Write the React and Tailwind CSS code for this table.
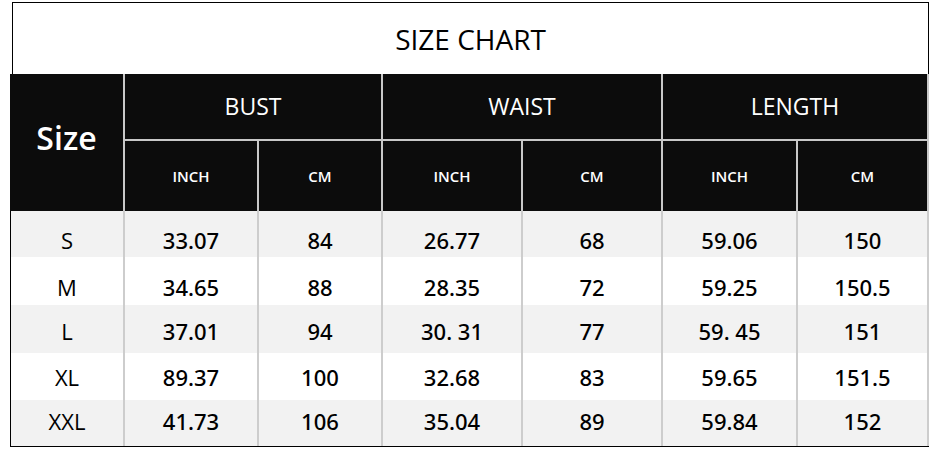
import React from 'react'

const headCols = 'grid grid-cols-[113px_132px_122px_138px_138px_133px_129px] gap-x-[2px]'
const bodyCols = 'grid grid-cols-[112px_132px_122px_138px_138px_133px_129px] gap-x-[2px]'

const rows = [
  { size: 'S', vals: ['33.07', '84', '26.77', '68', '59.06', '150'], bg: 'bg-[#f2f2f2]', h: 'h-[46px]', pad: 'pt-[12px]' },
  { size: 'M', vals: ['34.65', '88', '28.35', '72', '59.25', '150.5'], bg: 'bg-white', h: 'h-[48px]', pad: 'pt-[13px]' },
  { size: 'L', vals: ['37.01', '94', '30. 31', '77', '59. 45', '151'], bg: 'bg-[#f2f2f2]', h: 'h-[48px]', pad: 'pt-[5px]' },
  { size: 'XL', vals: ['89.37', '100', '32.68', '83', '59.65', '151.5'], bg: 'bg-white', h: 'h-[47px]', pad: 'pt-[2px]' },
  { size: 'XXL', vals: ['41.73', '106', '35.04', '89', '59.84', '152'], bg: 'bg-[#f2f2f2]', h: 'h-[46px]', pad: 'pb-[4px]' },
]

export default function App() {
  return (
    <div className="w-[937px] h-[460px] bg-white font-['Open_Sans',sans-serif] text-black">
      {/* title */}
      <div className="ml-[12px] mt-[2px] w-[917px] h-[72px] border-x border-t border-black flex items-center justify-center pt-[1px]">
        <span className="text-[28px] leading-none font-medium">SIZE CHART</span>
      </div>

      {/* header */}
      <div className={`ml-[10px] w-[919px] pr-[2px] bg-[#c9c9c9] grid-rows-[65px_70px] gap-y-[2px] ${headCols}`}>
        <div className="row-span-2 bg-[#0c0c0c] text-white flex items-center justify-center pb-[9px] text-[32px] font-semibold">
          Size
        </div>
        {['BUST', 'WAIST', 'LENGTH'].map((h) => (
          <div key={h} className="col-span-2 bg-[#0c0c0c] text-white flex items-center justify-center text-[23px] font-medium">
            {h}
          </div>
        ))}
        {['INCH', 'CM', 'INCH', 'CM', 'INCH', 'CM'].map((h, i) => (
          <div key={i} className="bg-[#0c0c0c] text-white flex items-center justify-center text-[15px] font-semibold">
            {h}
          </div>
        ))}
      </div>

      {/* body */}
      <div className="ml-[10px] w-[919px] border-l border-b border-black">
        {rows.map((r) => (
          <div key={r.size} className={`pr-[2px] bg-[#cdcdcd] ${bodyCols} ${r.h}`}>
            <div className={`${r.bg} flex items-center justify-center ${r.pad} text-[22px]`}>{r.size}</div>
            {r.vals.map((v, i) => (
              <div key={i} className={`${r.bg} flex items-center justify-center ${r.pad} text-[22px] font-['Noto_Sans',sans-serif] font-medium`}>
                {v}
              </div>
            ))}
          </div>
        ))}
      </div>
    </div>
  )
}
